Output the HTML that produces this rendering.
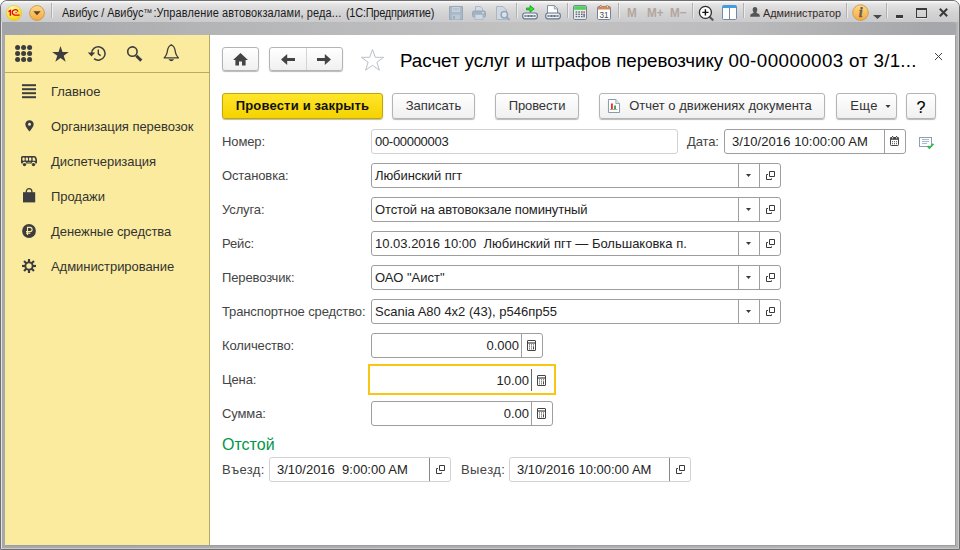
<!DOCTYPE html>
<html><head><meta charset="utf-8">
<style>
*{box-sizing:border-box;margin:0;padding:0}
html,body{width:960px;height:550px;overflow:hidden;background:#fff}
body{font-family:"Liberation Sans",sans-serif;font-size:13px;color:#333;position:relative}
.abs{position:absolute}
#frame{left:0;top:0;width:960px;height:550px;background:linear-gradient(90deg,#a7a8ab 0,#adaeb1 50%,#b3b4b6 100%);border:1px solid #6f6f6f;border-radius:7px 7px 0 0;box-shadow:inset 1px 1px 0 #e2e2e2,inset -1px -1px 0 #c9c9c9}
#titlebar{left:2px;top:22px;width:954px;height:13px;border-top-right-radius:4px;background:linear-gradient(90deg,#a3a4a8 0,#b3b4b6 20%,#c2c2c3 55%,#bdbdbf 75%,#a6a7aa 97%)}
#tbtop{left:1px;top:1px;width:958px;height:21px;background:linear-gradient(#fdfdfd 0,#e4e4e5 3px,#d3d3d4 12px,#cbcbcd 21px);border-radius:6px 6px 0 0}
#wtitle{left:62px;top:6px;font-size:12px;color:#1a1a1a;white-space:pre;transform:scaleX(.913);transform-origin:0 0}
#wuser{left:763px;top:6.5px;font-size:11.5px;color:#35291d;white-space:pre;transform:scaleX(.94);transform-origin:0 0}
.mm{top:5px;font-size:13px;font-weight:bold;color:#b3a69d;white-space:nowrap;transform:scaleX(.9);transform-origin:0 0}
.tsep{position:absolute;top:3px;width:1px;height:15px;background:#b0b1b3;box-shadow:1px 0 0 #ececec}
#side{left:5px;top:35px;width:205px;height:510px;background:#fbeb9e;border-right:1px solid #b7aa60}
#sidetop{left:0;top:0;width:204px;height:38px;border-bottom:1px solid #b9ad63}
#main{left:210px;top:35px;width:745px;height:510px;background:#fff}
.mi{position:absolute;margin-top:1px;letter-spacing:-.05px;left:46px;font-size:13px;color:#333;white-space:nowrap}
.lbl{position:absolute;margin-top:1px;letter-spacing:-.12px;white-space:nowrap;color:#444;font-size:13px}
.inp{position:absolute;height:25px;border:1px solid #9e9e9e;border-radius:3px;background:#fff}
.inp.ro{border-color:#d2d2d2}
.inp .t{position:absolute;left:3px;top:4px;white-space:pre;color:#222;font-size:13px}
.inp .r{position:absolute;right:24px;top:4px;white-space:pre;color:#222;font-size:13px}
.inp .sep{position:absolute;top:0;bottom:0;width:1px;background:#9e9e9e}
.inp.ro .sep{background:#d2d2d2}
.btn{position:absolute;height:26px;border:1px solid #b4b4b4;border-radius:3px;background:linear-gradient(#ffffff,#f0f0f0);box-shadow:0 1px 1px rgba(0,0,0,.28);white-space:nowrap;text-align:center;line-height:24px;color:#333;font-size:13px}
svg{position:absolute;overflow:visible}
</style></head><body>
<div id="frame" class="abs"></div>
<div id="titlebar" class="abs"></div>
<div id="tbtop" class="abs"></div>
<!-- 1C logo -->
<svg style="left:6px;top:5px" width="16" height="16" viewBox="0 0 16 16"><defs><radialGradient id="g1c" cx=".4" cy=".25" r=".8"><stop offset="0" stop-color="#fffbb8"/><stop offset=".55" stop-color="#ffe94a"/><stop offset="1" stop-color="#f5c800"/></radialGradient></defs><circle cx="8" cy="8" r="7.6" fill="url(#g1c)" stroke="#e6c33a" stroke-width=".6"/><path d="M2.500 6.700 L4.400 5.500 V10.700" fill="none" stroke="#e30613" stroke-width="1.500"/><path d="M12 6.600 A2.900 2.700 0 1 0 9.600 10.100 H13.600" fill="none" stroke="#e30613" stroke-width="1.250"/><path d="M11.100 7.900 A1.400 1.300 0 0 0 8.800 8.300" fill="none" stroke="#e30613" stroke-width=".8"/></svg>
<!-- orange dropdown -->
<svg style="left:29px;top:5px" width="16" height="16" viewBox="0 0 16 16"><defs><linearGradient id="gor" x1="0" y1="0" x2="0" y2="1"><stop offset="0" stop-color="#ffd98c"/><stop offset="1" stop-color="#f5a93c"/></linearGradient></defs><circle cx="8" cy="8" r="7.4" fill="url(#gor)" stroke="#c99a45" stroke-width=".9"/><path d="M4.3 6.3 H11.7 L8 10.2 Z" fill="#5a4526"/></svg>
<div class="tsep" style="left:51px"></div>
<div id="wtitle" class="abs">Авибус / Авибус<span style="font-size:10px;vertical-align:1px;letter-spacing:-1px">™</span><span style="letter-spacing:.15px;margin-left:2px">:Управление автовокзалами, реда...</span><span style="letter-spacing:-.25px;margin-left:5px">(1С:Предприятие)</span></div>
<!-- save -->
<svg style="left:449px;top:6px" width="14" height="14" viewBox="0 0 14 14"><path d="M.5 .5 H13.5 V13.5 H.5 Z" fill="#a9b7c6" stroke="#9aa9ba"/><rect x="3" y="1" width="8" height="5" fill="#c9d3dd"/><rect x="3" y="8.5" width="8" height="5" fill="#bcc8d3"/><rect x="4" y="10" width="2" height="3" fill="#a0afbf"/><path d="M4 2.5H10M4 4H10" stroke="#aab8c6" stroke-width=".7"/></svg>
<!-- print -->
<svg style="left:472px;top:6px" width="14" height="14" viewBox="0 0 14 14"><path d="M3.5 .5 H8.5 L10.5 2.5 V6 H3.5 Z" fill="#d3dbe3" stroke="#a9b7c6"/><rect x=".5" y="5" width="13" height="6" rx="1.5" fill="#a3b2c2" stroke="#98a8b9"/><rect x="3" y="8.5" width="8" height="5" fill="#cfd8e0" stroke="#a9b7c6" stroke-width=".8"/><rect x="10" y="6.3" width="2" height="1" fill="#dfe6ec"/></svg>
<!-- preview -->
<svg style="left:496px;top:6px" width="15" height="15" viewBox="0 0 15 15"><path d="M.5 .5 H7 L10.5 4 V13.5 H.5 Z" fill="#d0d8e0" stroke="#a9b7c6"/><circle cx="8.3" cy="8.8" r="3.2" fill="#dbe3ea" stroke="#94a6b7" stroke-width="1.5"/><path d="M10.7 11.2 L13.6 14" stroke="#94a6b7" stroke-width="1.8"/></svg>
<div class="tsep" style="left:516px"></div>
<!-- link with arrow -->
<svg style="left:522px;top:5px" width="16" height="15" viewBox="0 0 16 15"><path d="M4.5 3 H8 V.6 L12.2 3.9 L8 7.2 V4.9 H4.5 Z" fill="#2fe62f" stroke="#0f9a18" stroke-width=".8"/><rect x=".7" y="8" width="14.600" height="5.800" rx="2.200" fill="#eef1f4" stroke="#66778b" stroke-width="1.200"/><rect x="2.500" y="10" width="4.200" height="2" fill="#5f6f82"/><rect x="9.300" y="10" width="4.200" height="2" fill="#5f6f82"/><rect x="3.500" y="10.500" width="2.200" height="1" fill="#e8ecf0"/><rect x="10.300" y="10.500" width="2.200" height="1" fill="#e8ecf0"/><rect x="6" y="10.400" width="4" height="1.200" fill="#4f5f72"/></svg>
<!-- doc link -->
<svg style="left:545px;top:5px" width="16" height="15" viewBox="0 0 16 15"><path d="M2.5 .6 H9.5 L12.5 3.6 V9 H2.5 Z" fill="#fff" stroke="#7f8fa3" stroke-width="1"/><path d="M9.3 .8 V3.9 H12.3" fill="#dfe5ea" stroke="#7f8fa3" stroke-width=".8"/><rect x=".7" y="8" width="14.600" height="5.800" rx="2.200" fill="#eef1f4" stroke="#66778b" stroke-width="1.200"/><rect x="2.500" y="10" width="4.200" height="2" fill="#5f6f82"/><rect x="9.300" y="10" width="4.200" height="2" fill="#5f6f82"/><rect x="3.500" y="10.500" width="2.200" height="1" fill="#e8ecf0"/><rect x="10.300" y="10.500" width="2.200" height="1" fill="#e8ecf0"/><rect x="6" y="10.400" width="4" height="1.200" fill="#4f5f72"/></svg>
<div class="tsep" style="left:567px"></div>
<!-- calculator -->
<svg style="left:573px;top:5px" width="14" height="15" viewBox="0 0 14 15"><rect x=".5" y=".5" width="13" height="14" rx="1.3" fill="#e9ecef" stroke="#73849a"/><rect x="1.2" y="1.2" width="11.6" height="3.6" fill="#4fd05a"/><g fill="#5c6672"><rect x="2.6" y="6.3" width="1.6" height="1.4"/><rect x="5.3" y="6.3" width="1.6" height="1.4"/><rect x="8" y="6.3" width="1.6" height="1.4"/><rect x="2.6" y="8.6" width="1.6" height="1.4"/><rect x="5.3" y="8.6" width="1.6" height="1.4"/><rect x="8" y="8.6" width="1.6" height="1.4"/><rect x="2.6" y="10.9" width="1.6" height="1.4"/><rect x="5.3" y="10.9" width="1.6" height="1.4"/><rect x="8" y="10.9" width="1.6" height="1.4"/><rect x="10.4" y="8.6" width="1.4" height="3.7"/></g><rect x="10.4" y="6.3" width="1.4" height="1.6" fill="#e8323a"/></svg>
<!-- calendar -->
<svg style="left:597px;top:5px" width="14" height="15" viewBox="0 0 14 15"><rect x=".5" y="1.5" width="13" height="13" rx="1.3" fill="#fff" stroke="#73849a"/><path d="M.8 2.6 Q.8 1.6 1.8 1.6 H12.2 Q13.2 1.6 13.2 2.6 V4.6 H.8 Z" fill="#d98a55"/><rect x="3" y=".3" width="1.5" height="2.6" fill="#f3f3f3" stroke="#9a6a45" stroke-width=".4"/><rect x="9.5" y=".3" width="1.5" height="2.6" fill="#f3f3f3" stroke="#9a6a45" stroke-width=".4"/><text x="7" y="12.6" font-family="Liberation Sans" font-size="8.200" text-anchor="middle" fill="#4a4a4a">31</text></svg>
<div class="tsep" style="left:618px"></div>
<div class="abs mm" style="left:627px">M</div><div class="abs mm" style="left:647px">M+</div><div class="abs mm" style="left:670px">M&minus;</div>
<div class="tsep" style="left:692px"></div>
<!-- zoom -->
<svg style="left:698px;top:5px" width="16" height="16" viewBox="0 0 16 16"><path d="M11.5 11.8 L14.6 14.8" stroke="#555" stroke-width="2.2" stroke-linecap="round"/><circle cx="7.4" cy="7.4" r="6" fill="#fff" stroke="#2e2e2e" stroke-width="1.3"/><path d="M4.3 7.4 H10.5 M7.4 4.3 V10.5" stroke="#111" stroke-width="1.4"/></svg>
<!-- panels -->
<svg style="left:722px;top:5px" width="15" height="15" viewBox="0 0 15 15"><rect x=".5" y=".5" width="14" height="14" rx="1.2" fill="#fff" stroke="#6f8ba8"/><path d="M.6 2.9 V1.6 Q.6 .6 1.6 .6 H13.4 Q14.4 .6 14.4 1.6 V2.9 Z" fill="#3f9eea"/><path d="M7.5 3 V14" stroke="#6f8ba8" stroke-width="1"/></svg>
<div class="tsep" style="left:743px"></div>
<!-- user -->
<svg style="left:750px;top:7px" width="10" height="10" viewBox="0 0 10 10"><ellipse cx="5" cy="2.800" rx="2.300" ry="2.700" fill="#555"/><path d="M.2 9.800 V8.400 Q.2 6.700 3.300 6.100 L3.700 5 H6.300 L6.700 6.100 Q9.800 6.700 9.800 8.400 V9.800 Z" fill="#555"/></svg>
<div id="wuser" class="abs">Администратор</div>
<div class="tsep" style="left:846px"></div>
<!-- info -->
<svg style="left:852px;top:4px" width="17" height="17" viewBox="0 0 17 17"><circle cx="8.5" cy="8.6" r="7.8" fill="url(#gor)" stroke="#c99a45" stroke-width=".9"/><text x="8.6" y="13.2" font-family="Liberation Serif" font-style="italic" font-weight="bold" font-size="14" text-anchor="middle" fill="#665d50" stroke="#665d50" stroke-width=".4">i</text></svg>
<svg style="left:873px;top:15px" width="9" height="4" viewBox="0 0 9 4"><path d="M0 0 H9 L4.5 4 Z" fill="#4a4a4a"/></svg>
<div class="tsep" style="left:886px"></div>
<div class="abs" style="left:896px;top:15px;width:7px;height:3px;background:#3a3a3a;box-shadow:0 1px 0 #e6e6e6"></div>
<div class="abs" style="left:916px;top:8px;width:11px;height:10px;border:1px solid #3a3a3a;border-top-width:2px;box-shadow:0 1px 0 #e6e6e6"></div>
<svg style="left:939px;top:8px" width="9" height="9" viewBox="0 0 9 9"><path d="M.8 .8 L8.2 8.2 M8.2 .8 L.8 8.2" stroke="#3a3a3a" stroke-width="2"/></svg>
<div class="abs" style="left:5px;top:35px;width:950px;height:510px;box-shadow:1px 1px 0 #9c9da0"></div>
<div id="side" class="abs"><div id="sidetop" class="abs"></div>
<!-- sidebar top icons (coords relative to #side: x-5,y-35) -->
<svg style="left:10px;top:10px" width="18" height="18" viewBox="0 0 18 18" fill="#3d3d3f"><circle cx="2.6" cy="2.6" r="2.5"/><circle cx="8.6" cy="2.6" r="2.5"/><circle cx="14.6" cy="2.6" r="2.5"/><circle cx="2.6" cy="8.6" r="2.5"/><circle cx="8.6" cy="8.6" r="2.5"/><circle cx="14.6" cy="8.6" r="2.5"/><circle cx="2.6" cy="14.6" r="2.5"/><circle cx="8.6" cy="14.6" r="2.5"/><circle cx="14.6" cy="14.6" r="2.5"/></svg>
<svg style="left:47px;top:11px" width="17" height="16" viewBox="0 0 17 16"><path d="M8.5 0 L10.5 6 H16.8 L11.7 9.7 L13.7 15.8 L8.5 12 L3.3 15.8 L5.3 9.7 L.2 6 H6.5 Z" fill="#3d3d3f"/></svg>
<svg style="left:82px;top:10px" width="19" height="17" viewBox="0 0 19 17"><path d="M4.6 8.4 A6.7 6.7 0 1 1 7 13.6" fill="none" stroke="#3d3d3f" stroke-width="1.5"/><path d="M.8 7.6 H8.2 L4.5 11.6 Z" fill="#3d3d3f"/><path d="M11.3 4.6 V8.8 L13.6 10.6" fill="none" stroke="#3d3d3f" stroke-width="1.4"/></svg>
<svg style="left:121px;top:11px" width="17" height="16" viewBox="0 0 17 16"><circle cx="6.4" cy="5.6" r="4.7" fill="none" stroke="#3d3d3f" stroke-width="1.6"/><path d="M10.3 9.7 L15.3 14.6" stroke="#3d3d3f" stroke-width="3"/></svg>
<svg style="left:158px;top:9px" width="17" height="18" viewBox="0 0 17 18"><path d="M8.3 1.2 C5.2 1.6 4.6 5 4.2 8.2 C3.9 10.6 2.6 12.4 1.2 13.9 H15.4 C14 12.4 12.7 10.6 12.4 8.2 C12 5 11.4 1.6 8.3 1.2 Z" fill="none" stroke="#3d3d3f" stroke-width="1.3" stroke-linejoin="round"/><circle cx="8.3" cy="1.1" r=".9" fill="#3d3d3f"/><path d="M5.400 15.300 H11.200 Q8.300 19 5.400 15.300 Z" fill="#3d3d3f"/></svg>
<!-- menu icons -->
<svg style="left:17px;top:49px" width="14" height="14" viewBox="0 0 14 14" fill="#3d3d3f"><rect y=".2" width="14" height="2"/><rect y="4.2" width="14" height="2"/><rect y="8.2" width="14" height="2"/><rect y="12.2" width="14" height="2"/></svg>
<svg style="left:20px;top:85px" width="9" height="12" viewBox="0 0 9 12"><path d="M4.5 .2 C1.9 .2 .3 2 .3 4.2 C.3 6.8 3 9.4 4.5 11.6 C6 9.4 8.7 6.8 8.7 4.200 C8.7 2 7.100 .2 4.5 .2 Z M4.5 2.700 A1.500 1.500 0 1 0 4.500 5.700 A1.500 1.500 0 1 0 4.500 2.700 Z" fill="#3d3d3f" fill-rule="evenodd"/></svg>
<svg style="left:16px;top:121px" width="17" height="11" viewBox="0 0 17 11"><path d="M1.500 0 H13.800 Q15.400 .4 16 3.600 V6.800 Q16 7.600 15.200 7.600 H14.400 A1.900 1.900 0 0 0 10.600 7.600 H5.400 A1.900 1.900 0 0 0 1.600 7.600 H.800 Q0 7.600 0 6.800 V1.500 Q0 0 1.500 0 Z" fill="#3d3d3f"/><g fill="#fbeb9e"><rect x="1.400" y="1.500" width="2.300" height="3.200" rx=".9"/><rect x="4.700" y="1.500" width="2.300" height="3.200" rx=".9"/><rect x="8" y="1.500" width="2.300" height="3.200" rx=".9"/><path d="M11.600 1.500 H13.300 Q14.200 2.600 14.500 4.700 H11.600 Z"/></g><circle cx="3.500" cy="8.600" r="1.700" fill="#3d3d3f"/><circle cx="12.500" cy="8.600" r="1.700" fill="#3d3d3f"/><rect x="6.200" y="6.100" width="3.600" height=".8" fill="#fbeb9e" opacity=".5"/></svg>
<svg style="left:18px;top:153px" width="13" height="15" viewBox="0 0 13 15"><path d="M0 4.200 H12.200 V14.400 H0 Z" fill="#3d3d3f"/><path d="M3.300 6 V3.600 A2.800 2.900 0 0 1 8.900 3.600 V6" fill="none" stroke="#3d3d3f" stroke-width="1.300"/></svg>
<svg style="left:17px;top:189px" width="14" height="14" viewBox="0 0 14 14"><circle cx="7" cy="7" r="6.900" fill="#3d3d3f"/><path d="M5.500 11 V3.400 H8 A2.100 2.100 0 0 1 8 7.600 H4 M4 9.300 H8.300" fill="none" stroke="#fbeb9e" stroke-width="1.100"/></svg>
<svg style="left:17px;top:224px" width="14" height="14" viewBox="0 0 14 14"><g stroke="#3d3d3f" stroke-width="2.200"><path d="M7 0 V14"/><path d="M0 7 H14"/><path d="M2.050 2.050 L11.950 11.950"/><path d="M11.950 2.050 L2.050 11.950"/></g><circle cx="7" cy="7" r="4.600" fill="#3d3d3f"/><circle cx="7" cy="7" r="2.700" fill="#fbeb9e"/></svg>

<div class="mi" style="top:48px">Главное</div>
<div class="mi" style="top:83px">Организация перевозок</div>
<div class="mi" style="top:118px">Диспетчеризация</div>
<div class="mi" style="top:153px">Продажи</div>
<div class="mi" style="top:188px">Денежные средства</div>
<div class="mi" style="top:223px">Администрирование</div>
</div>


<div id="main" class="abs">
 <!-- header -->
 <div class="btn" style="left:12px;top:12px;width:37px;height:24px"><svg style="left:10px;top:5px" width="15" height="13" viewBox="0 0 15 13"><path d="M7.500 0 L15 7 H12.600 V12.600 H9 V8.400 H6 V12.600 H2.400 V7 H0 Z" fill="#444"/></svg></div>
 <div class="btn" style="left:59px;top:12px;width:74px;height:24px"><div class="abs" style="left:36px;top:0;width:1px;height:22px;background:#d4d4d4"></div><svg style="left:11px;top:6px" width="14" height="11" viewBox="0 0 14 11"><path d="M0 5.500 L6.200 0 V4 H14 V7 H6.200 V11 Z" fill="#444"/></svg><svg style="left:47px;top:6px" width="14" height="11" viewBox="0 0 14 11"><path d="M14 5.500 L7.800 0 V4 H0 V7 H7.800 V11 Z" fill="#444"/></svg></div>
 <svg style="left:150px;top:13px" width="25" height="24" viewBox="0 0 25 24"><path d="M12.500 1.500 L15.300 9.300 H23.600 L16.900 14.200 L19.400 22.200 L12.500 17.300 L5.600 22.200 L8.100 14.200 L1.400 9.300 H9.700 Z" fill="#fff" stroke="#b9c1c9" stroke-width="1"/></svg>
 <svg style="left:725px;top:18px" width="7" height="7" viewBox="0 0 7 7"><path d="M0 0 L7 7 M7 0 L0 7" stroke="#444" stroke-width="1"/></svg>
 <div class="abs" id="doctitle" style="left:190px;top:15px;font-size:18.8px;color:#000;white-space:pre;letter-spacing:-.05px">Расчет услуг и штрафов перевозчику <span style="letter-spacing:.42px">00-00000003</span> <span style="letter-spacing:.25px">от 3/1...</span></div>

 <!-- command bar -->
 <div class="btn" style="left:12px;top:58px;width:161px;background:linear-gradient(#ffe52c,#f5d300);border-color:#c4a600;font-weight:bold;color:#111;letter-spacing:.18px">Провести и закрыть</div>
 <div class="btn" style="left:182px;top:58px;width:83px">Записать</div>
 <div class="btn" style="left:285px;top:58px;width:84px;letter-spacing:-.12px">Провести</div>
 <div class="btn" style="left:389px;top:58px;width:226px;padding-left:17px"><svg style="left:8px;top:5px" width="12" height="14" viewBox="0 0 13 14" preserveAspectRatio="none"><path d="M.5 .5 H8.500 L12.500 4.500 V13.500 H.5 Z" fill="#fff" stroke="#8496a8"/><path d="M8.500 .5 V4.500 H12.500" fill="#e3e8ed" stroke="#8496a8" stroke-width=".8"/><rect x="3.200" y="4.500" width="2" height="5.500" fill="#f0282d"/><rect x="6.600" y="6.500" width="2" height="3.500" fill="#2eaa3c"/><path d="M2 10.500 H10" stroke="#8a8a8a" stroke-width=".8"/></svg>Отчет о движениях документа</div>
 <div class="btn" style="left:626px;top:58px;width:61px;padding-right:5px;letter-spacing:.3px">Еще<svg style="left:48px;top:11px;letter-spacing:0" width="6" height="3" viewBox="0 0 5 3"><path d="M0 0 H5 L2.500 3 Z" fill="#3a3a3a"/></svg></div>
 <div class="btn" style="left:696px;top:58px;width:30px;font-size:16px;color:#000;line-height:27px;-webkit-text-stroke:.15px #000">?</div>

 <!-- fields -->
 <div class="lbl" style="left:12px;top:98px">Номер:</div>
 <div class="inp ro" style="left:161px;top:94px;width:307px"><span class="t" style="letter-spacing:-.3px">00-00000003</span></div>
 <div class="lbl" style="left:477px;top:98px">Дата:</div>
 <div class="inp" style="left:514px;top:94px;width:182px"><span class="t" style="left:7px;letter-spacing:.07px">3/10/2016 10:00:00 AM</span><div class="sep" style="right:20px"></div><svg style="right:6px;top:6px" width="9" height="10" viewBox="0 0 9 10"><rect x=".5" y="1.500" width="8" height="8" rx=".8" fill="#fff" stroke="#444"/><rect x=".5" y="1.200" width="8" height="2.600" fill="#444"/><rect x="2" y="0" width="1.100" height="1.300" fill="#444"/><rect x="6" y="0" width="1.100" height="1.300" fill="#444"/><rect x="2" y="1.300" width="1.100" height="1.100" fill="#fff"/><rect x="6" y="1.300" width="1.100" height="1.100" fill="#fff"/><g fill="#4a4a4a"><rect x="2" y="5.200" width="1" height="1"/><rect x="4" y="5.200" width="1" height="1"/><rect x="6" y="5.200" width="1" height="1"/><rect x="2" y="7.200" width="1" height="1"/><rect x="4" y="7.200" width="1" height="1"/><rect x="6" y="7.200" width="1" height="1"/></g></svg></div>
 <svg style="left:709px;top:102px" width="16" height="13" viewBox="0 0 16 13"><rect x=".5" y=".5" width="12" height="9" fill="#fff" stroke="#8aa0b8"/><path d="M3 2.500 H10 M3 4.500 H10 M3 6.500 H8" stroke="#a9b9ca" stroke-width="1"/><path d="M8.600 9.200 L10.400 11 L14.400 6.800" fill="none" stroke="#2dbb45" stroke-width="1.800"/></svg>

 <div class="lbl" style="left:12px;top:132px">Остановка:</div>
 <div class="inp" style="left:161px;top:128px;width:410px"><span class="t" style="letter-spacing:-.08px">Любинский пгт</span><div class="sep" style="right:41px"></div><div class="sep" style="right:20px"></div><svg style="right:29px;top:10px" width="5" height="3" viewBox="0 0 5 3"><path d="M0 0 H5 L2.500 3 Z" fill="#3a3a3a"/></svg><svg style="right:5px;top:7px" width="10" height="9" viewBox="0 0 10 9"><path d="M4.500 .5 H9.500 V5.500 H4.500 Z" fill="none" stroke="#3a3a3a" stroke-width="1"/><path d="M3 3.500 H1.500 V8.500 H6.500 V7.400" fill="none" stroke="#3a3a3a" stroke-width="1"/></svg></div>
 <div class="lbl" style="left:12px;top:166px">Услуга:</div>
 <div class="inp" style="left:161px;top:162px;width:410px"><span class="t" style="letter-spacing:-.13px">Отстой на автовокзале поминутный</span><div class="sep" style="right:41px"></div><div class="sep" style="right:20px"></div><svg style="right:29px;top:10px" width="5" height="3" viewBox="0 0 5 3"><path d="M0 0 H5 L2.500 3 Z" fill="#3a3a3a"/></svg><svg style="right:5px;top:7px" width="10" height="9" viewBox="0 0 10 9"><path d="M4.500 .5 H9.500 V5.500 H4.500 Z" fill="none" stroke="#3a3a3a" stroke-width="1"/><path d="M3 3.500 H1.500 V8.500 H6.500 V7.400" fill="none" stroke="#3a3a3a" stroke-width="1"/></svg></div>
 <div class="lbl" style="left:12px;top:200px">Рейс:</div>
 <div class="inp" style="left:161px;top:196px;width:410px"><span class="t">10.03.2016 10:00  Любинский пгт — Большаковка п.</span><div class="sep" style="right:41px"></div><div class="sep" style="right:20px"></div><svg style="right:29px;top:10px" width="5" height="3" viewBox="0 0 5 3"><path d="M0 0 H5 L2.500 3 Z" fill="#3a3a3a"/></svg><svg style="right:5px;top:7px" width="10" height="9" viewBox="0 0 10 9"><path d="M4.500 .5 H9.500 V5.500 H4.500 Z" fill="none" stroke="#3a3a3a" stroke-width="1"/><path d="M3 3.500 H1.500 V8.500 H6.500 V7.400" fill="none" stroke="#3a3a3a" stroke-width="1"/></svg></div>
 <div class="lbl" style="left:12px;top:234px">Перевозчик:</div>
 <div class="inp" style="left:161px;top:230px;width:410px"><span class="t">ОАО "Аист"</span><div class="sep" style="right:41px"></div><div class="sep" style="right:20px"></div><svg style="right:29px;top:10px" width="5" height="3" viewBox="0 0 5 3"><path d="M0 0 H5 L2.500 3 Z" fill="#3a3a3a"/></svg><svg style="right:5px;top:7px" width="10" height="9" viewBox="0 0 10 9"><path d="M4.500 .5 H9.500 V5.500 H4.500 Z" fill="none" stroke="#3a3a3a" stroke-width="1"/><path d="M3 3.500 H1.500 V8.500 H6.500 V7.400" fill="none" stroke="#3a3a3a" stroke-width="1"/></svg></div>
 <div class="lbl" style="left:12px;top:268px">Транспортное средство:</div>
 <div class="inp" style="left:161px;top:264px;width:410px"><span class="t">Scania A80 4x2 (43), р546пр55</span><div class="sep" style="right:41px"></div><div class="sep" style="right:20px"></div><svg style="right:29px;top:10px" width="5" height="3" viewBox="0 0 5 3"><path d="M0 0 H5 L2.500 3 Z" fill="#3a3a3a"/></svg><svg style="right:5px;top:7px" width="10" height="9" viewBox="0 0 10 9"><path d="M4.500 .5 H9.500 V5.500 H4.500 Z" fill="none" stroke="#3a3a3a" stroke-width="1"/><path d="M3 3.500 H1.500 V8.500 H6.500 V7.400" fill="none" stroke="#3a3a3a" stroke-width="1"/></svg></div>

 <div class="lbl" style="left:12px;top:302px">Количество:</div>
 <div class="inp" style="left:161px;top:298px;width:172px"><span class="r" style="right:23px">0.000</span><div class="sep" style="right:20px"></div><svg style="right:6px;top:6px" width="9" height="11" viewBox="0 0 9 11"><rect x=".5" y=".5" width="8" height="10" rx=".4" fill="#fff" stroke="#444"/><path d="M.5 3 H8.500" stroke="#444" stroke-width="1.200"/><g fill="#4a4a4a"><rect x="2" y="4.400" width="1" height="1"/><rect x="4" y="4.400" width="1" height="1"/><rect x="6" y="4.400" width="1" height="1"/><rect x="2" y="6.400" width="1" height="1"/><rect x="4" y="6.400" width="1" height="1"/><rect x="6" y="6.300" width="1" height="3.100"/><rect x="2" y="8.400" width="1" height="1"/><rect x="4" y="8.400" width="1" height="1"/></g></svg></div>
 <div class="lbl" style="left:12px;top:336px">Цена:</div>
 <div class="abs" style="left:158px;top:329px;width:188px;height:31px;border:2px solid #f9c713;background:#fff"><span class="abs" style="right:25px;top:7px;white-space:pre;color:#222;font-size:13px">10.00</span><div class="abs" style="right:22px;top:3px;width:1px;height:22px;background:#666"></div><svg style="right:8px;top:9px" width="9" height="11" viewBox="0 0 9 11"><rect x=".5" y=".5" width="8" height="10" rx=".4" fill="#fff" stroke="#444"/><path d="M.5 3 H8.500" stroke="#444" stroke-width="1.200"/><g fill="#4a4a4a"><rect x="2" y="4.400" width="1" height="1"/><rect x="4" y="4.400" width="1" height="1"/><rect x="6" y="4.400" width="1" height="1"/><rect x="2" y="6.400" width="1" height="1"/><rect x="4" y="6.400" width="1" height="1"/><rect x="6" y="6.300" width="1" height="3.100"/><rect x="2" y="8.400" width="1" height="1"/><rect x="4" y="8.400" width="1" height="1"/></g></svg></div>
 <div class="lbl" style="left:12px;top:370px">Сумма:</div>
 <div class="inp" style="left:161px;top:366px;width:182px"><span class="r" style="right:23px">0.00</span><div class="sep" style="right:20px"></div><svg style="right:6px;top:6px" width="9" height="11" viewBox="0 0 9 11"><rect x=".5" y=".5" width="8" height="10" rx=".4" fill="#fff" stroke="#444"/><path d="M.5 3 H8.500" stroke="#444" stroke-width="1.200"/><g fill="#4a4a4a"><rect x="2" y="4.400" width="1" height="1"/><rect x="4" y="4.400" width="1" height="1"/><rect x="6" y="4.400" width="1" height="1"/><rect x="2" y="6.400" width="1" height="1"/><rect x="4" y="6.400" width="1" height="1"/><rect x="6" y="6.300" width="1" height="3.100"/><rect x="2" y="8.400" width="1" height="1"/><rect x="4" y="8.400" width="1" height="1"/></g></svg></div>

 <div class="abs" style="left:12px;top:401px;font-size:16px;color:#009646;white-space:nowrap">Отстой</div>
 <div class="lbl" style="left:12px;top:426px;letter-spacing:.35px">Въезд:</div>
 <div class="inp ro" style="left:59px;top:422px;width:182px"><span class="t" style="left:7px">3/10/2016  9:00:00 AM</span><div class="sep" style="right:20px;background:#888"></div><svg style="right:5px;top:7px" width="10" height="9" viewBox="0 0 10 9"><path d="M4.500 .5 H9.500 V5.500 H4.500 Z" fill="none" stroke="#3a3a3a" stroke-width="1"/><path d="M3 3.500 H1.500 V8.500 H6.500 V7.400" fill="none" stroke="#3a3a3a" stroke-width="1"/></svg></div>
 <div class="lbl" style="left:251px;top:426px;letter-spacing:.4px">Выезд:</div>
 <div class="inp ro" style="left:299px;top:422px;width:182px"><span class="t" style="left:7px">3/10/2016 10:00:00 AM</span><div class="sep" style="right:20px;background:#888"></div><svg style="right:5px;top:7px" width="10" height="9" viewBox="0 0 10 9"><path d="M4.500 .5 H9.500 V5.500 H4.500 Z" fill="none" stroke="#3a3a3a" stroke-width="1"/><path d="M3 3.500 H1.500 V8.500 H6.500 V7.400" fill="none" stroke="#3a3a3a" stroke-width="1"/></svg></div>
</div>
</body></html>
